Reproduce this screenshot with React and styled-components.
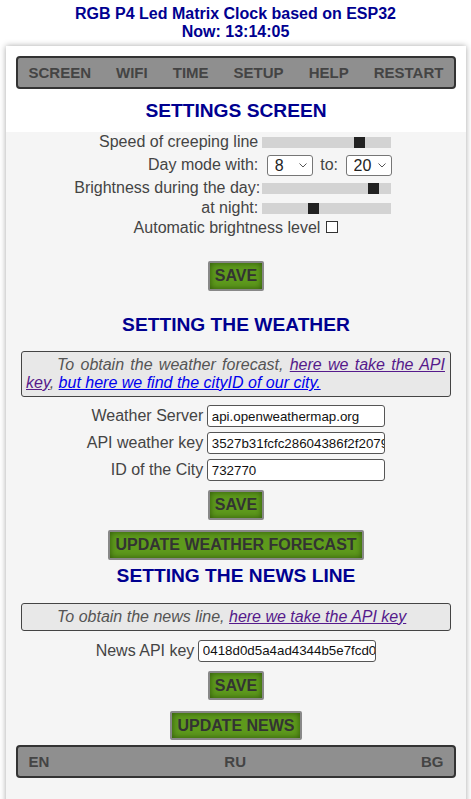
import React from "react";
import styled, { createGlobalStyle } from "styled-components";

const GlobalStyle = createGlobalStyle`
  body {
    margin: 0;
    background: #fff;
    font-family: "Liberation Sans", Arial, sans-serif;
  }
`;

const PageTitle = styled.div`
  padding-top: 5px;
  text-align: center;
  color: #000090;
  font-size: 16px;
  font-weight: bold;
  line-height: 18px;
`;

const Container = styled.div`
  margin: 5px 5px 0 6px;
  background: #f5f5f5;
  box-shadow: 0 0 6px rgba(0, 0, 0, 0.35);
  padding-bottom: 40px;
`;

const Top = styled.div`
  background: #fff;
  padding: 10px 10px 10.5px;
`;

const Bar = styled.div`
  display: flex;
  justify-content: space-between;
  align-items: center;
  height: 29px;
  margin: ${p => (p.$inset ? "5px 10px 0" : "0")};
  padding: 0 10.5px;
  background: #8f8f8f;
  border: 2px solid #333;
  border-radius: 4px;
`;

const BarLink = styled.a`
  color: #444;
  font-size: 15px;
  font-weight: bold;
  text-decoration: none;
`;

const Heading = styled.h2`
  margin: ${p => p.$mt || 0}px 0 0;
  text-align: center;
  color: #000090;
  font-size: 19.2px;
  line-height: 22px;
  font-weight: bold;
`;

const SettingsGrid = styled.div`
  display: grid;
  grid-template-columns: 184px 130px;
  grid-template-rows: 20px 26px 20px 20px;
  column-gap: 3.5px;
  justify-content: center;
  padding-right: 6px;
  color: #444;
  font-size: 16px;
`;

const RowLabel = styled.label`
  align-self: center;
  text-align: right;
  line-height: 20px;
  white-space: nowrap;
`;

const Control = styled.div`
  display: flex;
  align-items: center;
`;

const Slider = styled.input.attrs({ type: "range", min: 0, max: 100 })`
  -webkit-appearance: none;
  appearance: none;
  width: 129px;
  height: 11px;
  margin: 0;
  background: #d3d3d3;
  outline: none;

  &::-webkit-slider-thumb {
    -webkit-appearance: none;
    width: 11px;
    height: 11px;
    background: #222;
    border: none;
    border-radius: 0;
  }
`;

const SelectWrap = styled.span`
  position: relative;
  display: inline-block;
  height: 21px;
  margin-left: ${p => p.$ml || 0}px;
`;

const Select = styled.select`
  -webkit-appearance: none;
  appearance: none;
  box-sizing: border-box;
  width: 46px;
  height: 21px;
  margin: 0;
  padding: 0 0 0 7px;
  border: 1px solid #767676;
  border-radius: 3px;
  background: #fff;
  color: #222;
  font-family: inherit;
  font-size: 16px;
`;

const Chevron = styled.svg`
  position: absolute;
  right: 6px;
  top: 8.5px;
  pointer-events: none;
`;

const To = styled.span`
  margin: 0 7.5px;
  line-height: 20px;
`;

const CheckRow = styled.div`
  text-align: center;
  line-height: 20px;
  color: #444;
  font-size: 16px;
`;

const Check = styled.input.attrs({ type: "checkbox" })`
  -webkit-appearance: none;
  appearance: none;
  width: 12px;
  height: 12px;
  margin: 0 0 0 6px;
  border: 1px solid #333;
  background: #fff;
  vertical-align: baseline;
`;

const Button = styled.button`
  display: block;
  margin: ${p => p.$mt || 0}px auto 0;
  padding: 3px 5px;
  border: 2px solid #888;
  border-radius: 2px;
  background: #5e9a1c;
  box-shadow: inset 0 0 6px rgba(30, 60, 0, 0.75);
  color: #333;
  font-family: inherit;
  font-size: 16px;
  font-weight: bold;
  line-height: 19.5px;
`;

const Note = styled.div`
  margin: 15.4px 15px 0;
  padding: 4px 5px 4.5px 4px;
  border: 1px solid #444;
  border-radius: 3px;
  background: #e8e8e8;
  color: #555;
  font-style: italic;
  font-size: 16px;
  line-height: 18px;
  text-align: justify;
  text-indent: 31px;
`;

const NoteLink = styled.a`
  color: ${p => (p.$visited ? "#551a8b" : "#0000ee")};
  text-decoration: underline;
`;

const FormGrid = styled.div`
  display: grid;
  grid-template-columns: auto 178px;
  column-gap: 4px;
  row-gap: 5px;
  justify-content: center;
  align-items: center;
  margin-top: ${p => p.$mt || 8}px;
`;

const FieldLabel = styled.label`
  text-align: right;
  color: #444;
  font-size: 16px;
  white-space: nowrap;
`;

const TextInput = styled.input`
  box-sizing: border-box;
  width: 178px;
  height: 22px;
  margin: 0;
  padding: 0 0 0 3.5px;
  border: 1px solid #555;
  border-radius: 3px;
  background: #fff;
  color: #111;
  font-family: inherit;
  font-size: 13.333px;
`;

function HourSelect({ value, ml }) {
  return (
    <SelectWrap $ml={ml}>
      <Select defaultValue={value}>
        {Array.from({ length: 24 }, (_, i) => (
          <option key={i} value={i}>
            {i}
          </option>
        ))}
      </Select>
      <Chevron width="8" height="5" viewBox="0 0 8 5">
        <path d="M0.5 0.5 L4 4 L7.5 0.5" fill="none" stroke="#555" strokeWidth="1" />
      </Chevron>
    </SelectWrap>
  );
}

export default function App() {
  const menu = ["SCREEN", "WIFI", "TIME", "SETUP", "HELP", "RESTART"];
  const langs = ["EN", "RU", "BG"];

  return (
    <>
      <GlobalStyle />
      <PageTitle>
        RGB P4 Led Matrix Clock based on ESP32
        <br />
        Now: 13:14:05
      </PageTitle>
      <Container>
        <Top>
          <Bar>
            {menu.map(item => (
              <BarLink key={item} href="#">
                {item}
              </BarLink>
            ))}
          </Bar>
          <Heading $mt={10.6}>SETTINGS SCREEN</Heading>
        </Top>

        <SettingsGrid>
          <RowLabel>Speed of creeping line</RowLabel>
          <Control>
            <Slider defaultValue={78} />
          </Control>
          <RowLabel>Day mode with:</RowLabel>
          <Control>
            <HourSelect value={8} ml={5} />
            <To>to:</To>
            <HourSelect value={20} />
          </Control>
          <RowLabel>Brightness during the day:</RowLabel>
          <Control>
            <Slider defaultValue={90} />
          </Control>
          <RowLabel>at night:</RowLabel>
          <Control>
            <Slider defaultValue={39} />
          </Control>
        </SettingsGrid>
        <CheckRow>
          Automatic brightness level
          <Check />
        </CheckRow>
        <Button $mt={23}>SAVE</Button>

        <Heading $mt={23}>SETTING THE WEATHER</Heading>
        <Note>
          To obtain the weather forecast,{" "}
          <NoteLink $visited href="#">
            here we take the API key
          </NoteLink>
          , <NoteLink href="#">but here we find the cityID of our city.</NoteLink>
        </Note>
        <FormGrid>
          <FieldLabel>Weather Server</FieldLabel>
          <TextInput defaultValue="api.openweathermap.org" />
          <FieldLabel>API weather key</FieldLabel>
          <TextInput defaultValue="3527b31fcfc28604386f2f20797fe1c5" />
          <FieldLabel>ID of the City</FieldLabel>
          <TextInput defaultValue="732770" />
        </FormGrid>
        <Button $mt={9}>SAVE</Button>
        <Button $mt={10.5}>UPDATE WEATHER FORECAST</Button>

        <Heading $mt={5.4}>SETTING THE NEWS LINE</Heading>
        <Note>
          To obtain the news line,{" "}
          <NoteLink $visited href="#">
            here we take the API key
          </NoteLink>
        </Note>
        <FormGrid $mt={8.5}>
          <FieldLabel>News API key</FieldLabel>
          <TextInput defaultValue="0418d0d5a4ad4344b5e7fcd0b2c9e1f3" />
        </FormGrid>
        <Button $mt={9}>SAVE</Button>
        <Button $mt={10.5}>UPDATE NEWS</Button>

        <Bar $inset>
          {langs.map(l => (
            <BarLink key={l} href="#">
              {l}
            </BarLink>
          ))}
        </Bar>
      </Container>
    </>
  );
}
